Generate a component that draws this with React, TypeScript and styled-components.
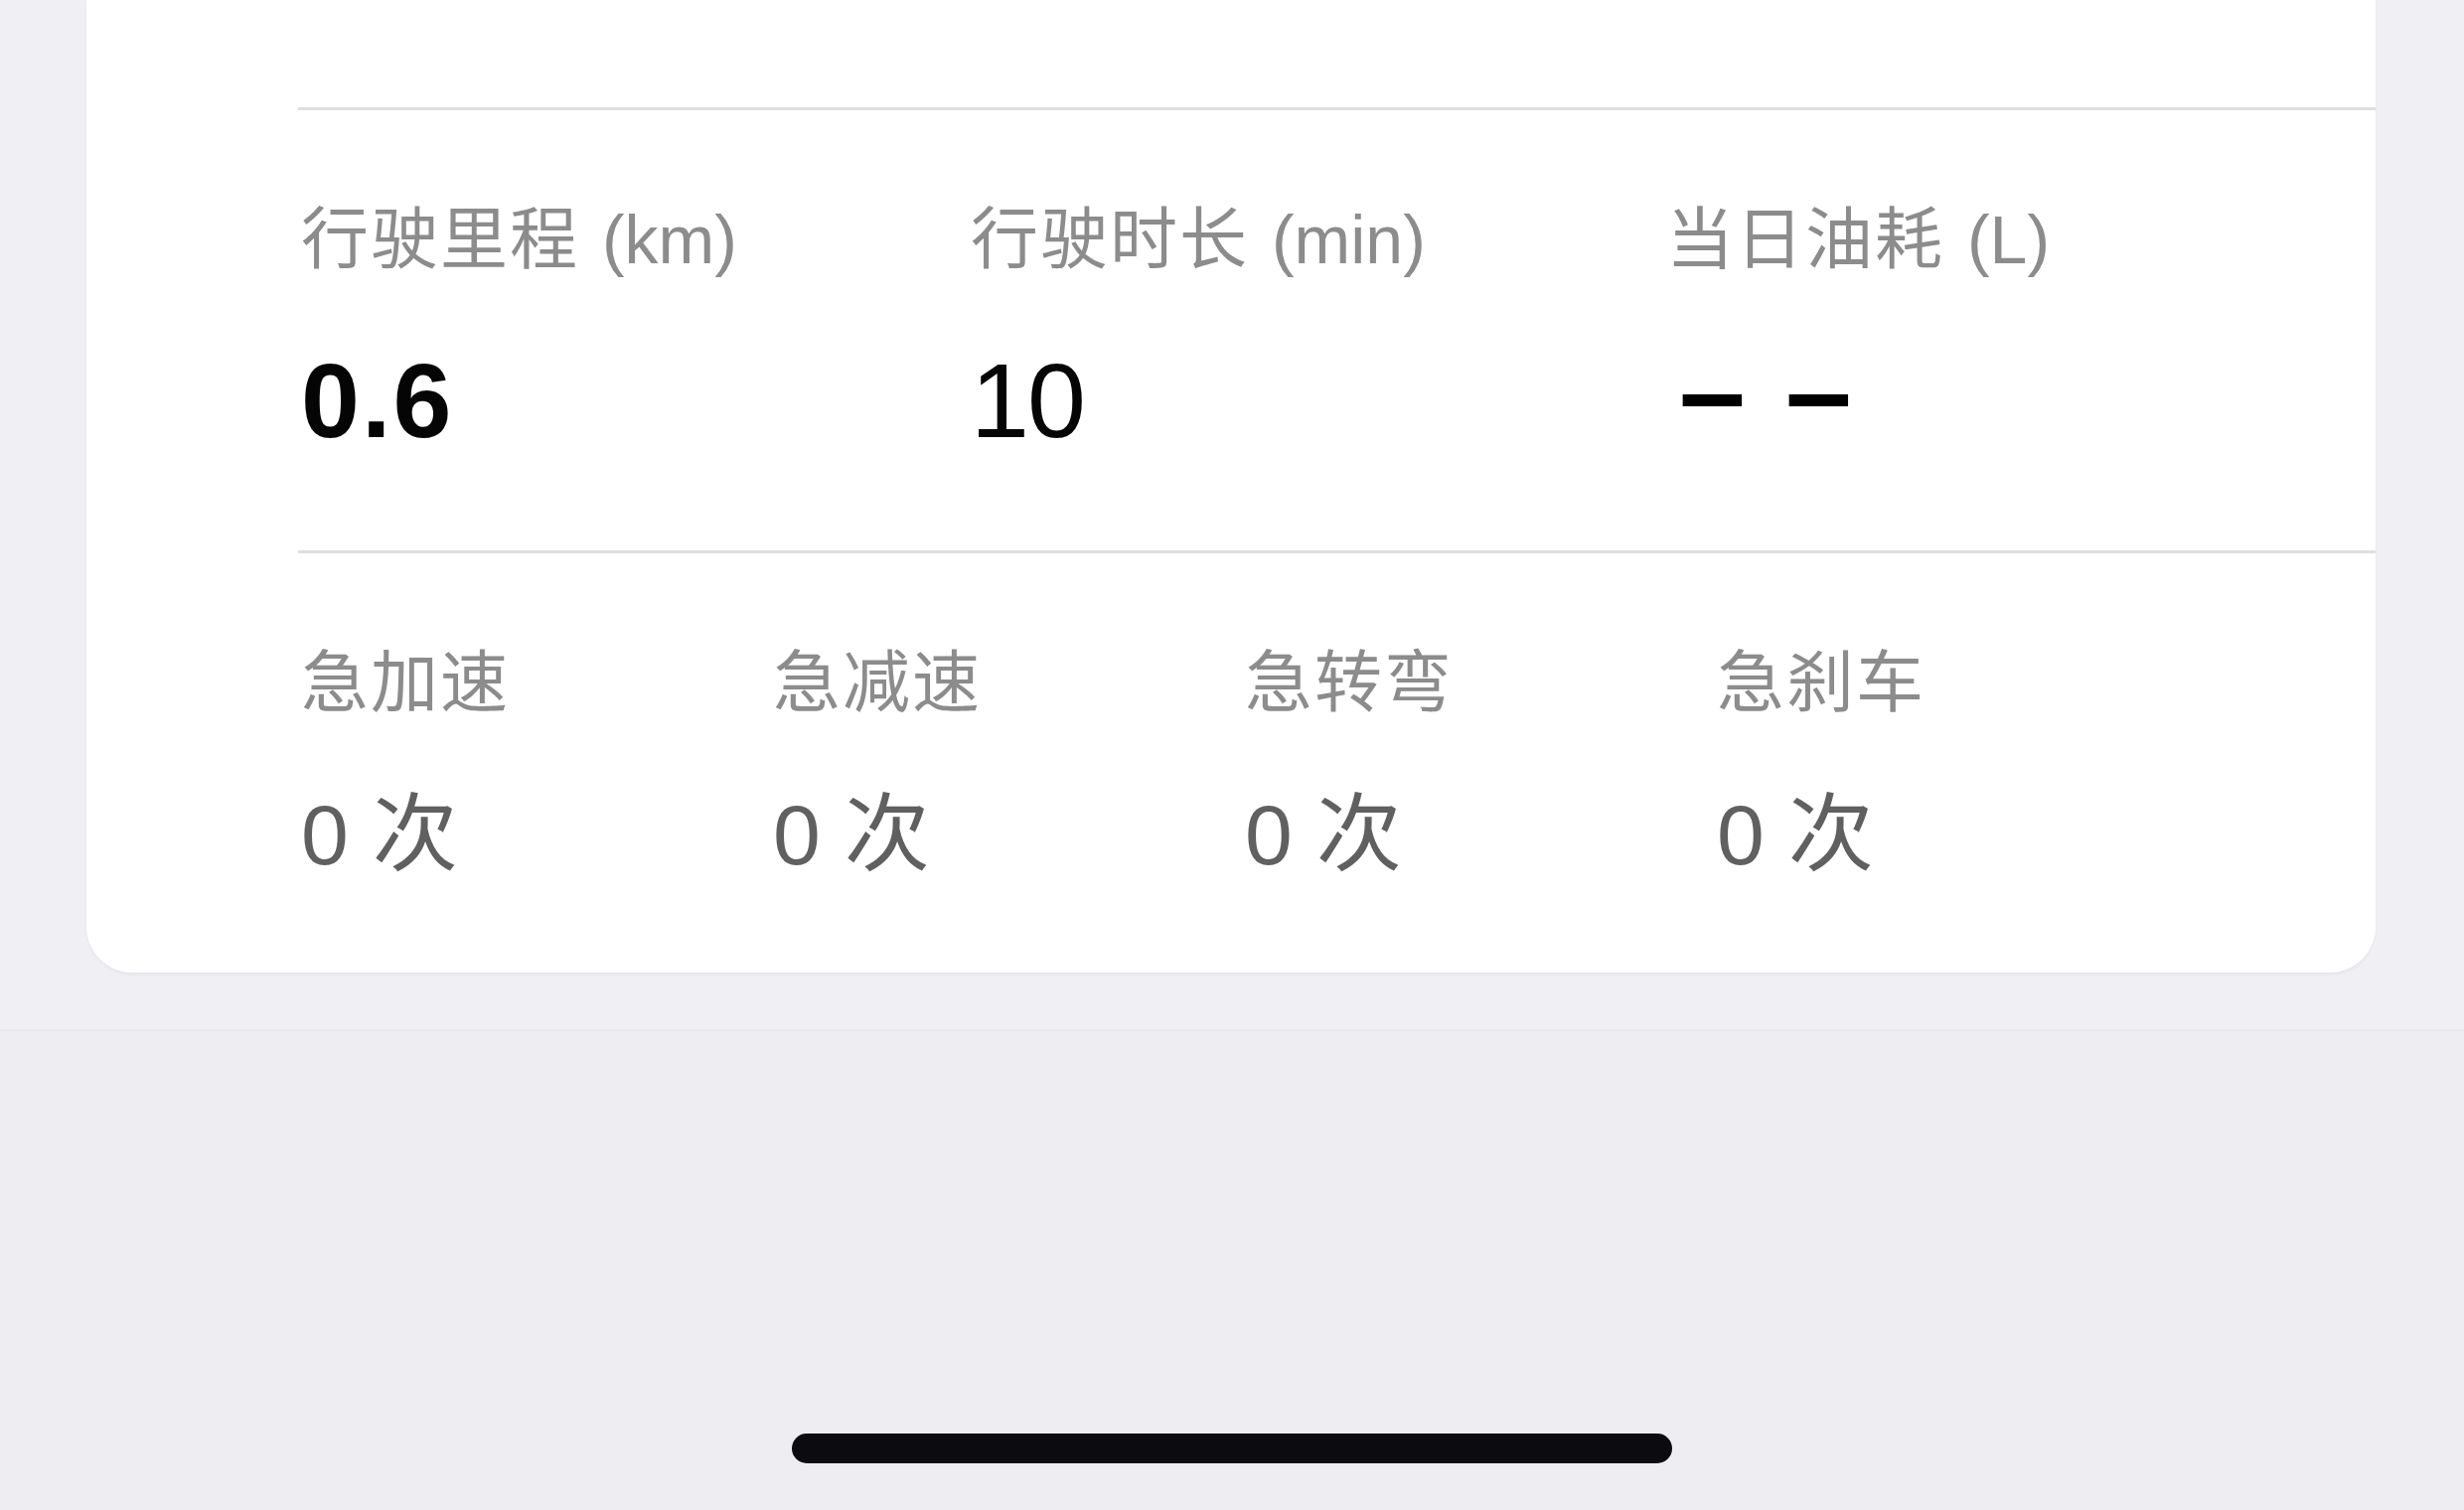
import React from "react";
import styled, { createGlobalStyle } from "styled-components";

const Global = createGlobalStyle`
  html, body {
    margin: 0;
    padding: 0;
    background: #efeff4;
  }
  body {
    font-family: "Liberation Sans", "Noto Sans CJK SC", sans-serif;
    -webkit-font-smoothing: antialiased;
  }
`;

const Page = styled.div`
  display: flex;
  flex-direction: column;
  min-height: 1520px;
  width: 100%;
`;

const Card = styled.section`
  margin: 0 89px 0 87px;
  padding: 108px 0 0 213px;
  background: #ffffff;
  border-radius: 0 0 46px 46px;
  box-shadow: 0 2px 3px rgba(30, 30, 60, 0.05);
`;

const Divider = styled.div`
  height: 3px;
  background: #dedede;
`;

const Section = styled.div<{ $bottom: number }>`
  padding: 96px 0 ${(p) => p.$bottom}px 3px;
`;

const Grid = styled.div<{ $cols: string }>`
  display: grid;
  grid-template-columns: ${(p) => p.$cols};
`;

const Cell = styled.div`
  display: flex;
  flex-direction: column;
  align-items: flex-start;
`;

const Label = styled.div`
  font-size: 68px;
  line-height: 1;
  letter-spacing: 2px;
  color: #8c8c8c;
  white-space: nowrap;
`;

const Unit = styled.span`
  margin-left: 4px;
  letter-spacing: 0;
`;

const Value = styled.div<{ $bold?: boolean }>`
  margin-top: 75px;
  font-size: 106px;
  line-height: 1;
  font-weight: ${(p) => (p.$bold ? 700 : 400)};
  letter-spacing: ${(p) => (p.$bold ? "2px" : "-2px")};
  color: #050505;
  white-space: nowrap;
`;

const Dash = styled.span`
  display: inline-block;
  margin-left: 13px;
  font-size: 120px;
  font-weight: 700;
  line-height: 0;
  letter-spacing: 3.5px;
  vertical-align: 5px;
  color: #000;
`;

const Count = styled.div`
  margin-top: 76px;
  font-size: 86px;
  line-height: 1;
  color: #606060;
  white-space: nowrap;
`;

const Spacer = styled.div`
  height: 57px;
`;

const Footer = styled.footer`
  flex: 1;
  display: flex;
  align-items: flex-end;
  justify-content: center;
  padding-bottom: 47px;
  border-top: 2px solid #e7ebec;
  background: #eeeef2;
`;

const HomeBar = styled.div`
  width: 886px;
  height: 30px;
  border-radius: 15px;
  background: #0b0b10;
`;

const stats = [
  { label: "行驶里程", unit: "(km)", value: "0.6", bold: true },
  { label: "行驶时长", unit: "(min)", value: "10", bold: false },
  { label: "当日油耗", unit: "(L)", value: null, bold: false },
];

const events = ["急加速", "急减速", "急转弯", "急刹车"];

export default function App() {
  return (
    <Page>
      <Global />
      <Card>
        <Divider />
        <Section $bottom={98}>
          <Grid $cols="674px 700px 1fr">
            {stats.map((s) => (
              <Cell key={s.label}>
                <Label>
                  {s.label}
                  <Unit> {s.unit}</Unit>
                </Label>
                <Value $bold={s.bold}>
                  {s.value ?? <Dash>– –</Dash>}
                </Value>
              </Cell>
            ))}
          </Grid>
        </Section>
        <Divider />
        <Section $bottom={96}>
          <Grid $cols="repeat(4, 475px)">
            {events.map((e) => (
              <Cell key={e}>
                <Label>{e}</Label>
                <Count>0 次</Count>
              </Cell>
            ))}
          </Grid>
        </Section>
      </Card>
      <Spacer />
      <Footer>
        <HomeBar />
      </Footer>
    </Page>
  );
}
